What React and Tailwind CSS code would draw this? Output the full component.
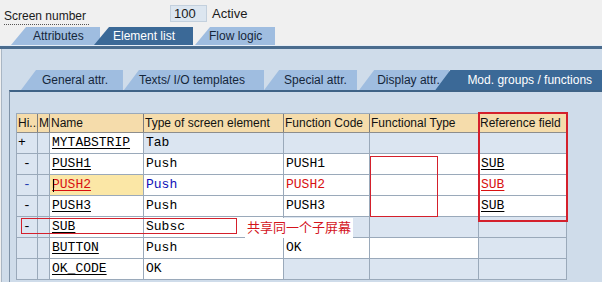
import React from 'react';

const COLS = [21, 12, 94, 140, 86, 109, 88];
const HEAD = ['Hi...', 'M', 'Name', 'Type of screen element', 'Function Code', 'Functional Type', 'Reference field'];

// bg per column: w = white, b = light blue, y = yellow
const ROWS = [
  { hi: '+', name: 'MYTABSTRIP', type: 'Tab', fc: '', rf: '', bg: 'bbwbbbb' },
  { hi: '-', name: 'PUSH1', type: 'Push', fc: 'PUSH1', rf: 'SUB', bg: 'bbwwwww' },
  { hi: '-', name: 'PUSH2', type: 'Push', fc: 'PUSH2', rf: 'SUB', bg: 'bbywwww', sel: true },
  { hi: '-', name: 'PUSH3', type: 'Push', fc: 'PUSH3', rf: 'SUB', bg: 'bbwwwww' },
  { hi: '-', name: 'SUB', type: 'Subsc', fc: '', rf: '', bg: 'bbwwbbb' },
  { hi: '', name: 'BUTTON', type: 'Push', fc: 'OK', rf: '', bg: 'bbwwwwb' },
  { hi: '', name: 'OK_CODE', type: 'OK', fc: '', rf: '', bg: 'bbwwbbb' },
];

const bgClass = { w: 'bg-white', b: 'bg-[#dbe5f1]', y: 'bg-[#fbe7a6]' };

const Tab = ({ label, active, className, textPad }) => (
  <div
    className={
      'h-full flex items-center [clip-path:polygon(15px_0,100%_0,100%_100%,0_100%)] ' +
      (active ? 'bg-[#3b6997] text-white z-10 ' : 'bg-[#9fbde0] text-[#15263a] ') +
      className
    }
  >
    <span className={textPad + ' whitespace-nowrap'}>{label}</span>
  </div>
);

const Cell = ({ w, bg, children, className = '' }) => (
  <div
    style={{ width: w }}
    className={'shrink-0 h-full border-r border-[#9aa9ba] overflow-hidden whitespace-nowrap ' + bgClass[bg] + ' ' + className}
  >
    {children}
  </div>
);

export default function App() {
  return (
    <div className="w-[602px] h-[282px] overflow-hidden bg-[#f0f0f0] flex flex-col font-['Liberation_Sans',sans-serif] text-[12px] text-[#1a1a1a]">
      {/* screen number row */}
      <div className="h-[27px] flex items-start pt-[5px] pl-[4px] shrink-0">
        <div className="w-[166px] pt-[2px]">
          <span className="border-b border-dotted border-[#555] pr-[3px] leading-[15px] inline-block">Screen number</span>
        </div>
        <div className="w-[37px] h-[17px] bg-[#dce6f0] border border-[#c3d0dd] text-[13px] leading-[15px] pl-[3px]">100</div>
        <div className="ml-[5px] text-[13px] leading-[17px]">Active</div>
      </div>

      {/* main tabs */}
      <div className="h-[19px] flex shrink-0 pl-[11px] border-b border-[#e6eef7]">
        <Tab label="Attributes" className="w-[89px]" textPad="pl-[22px]" />
        <Tab label="Element list" active className="w-[99px] -ml-[6px]" textPad="pl-[19px]" />
        <Tab label="Flow logic" className="w-[80px] ml-[2px]" textPad="pl-[14px]" />
      </div>
      <div className="h-[3px] bg-[#4a6c8e] shrink-0" />

      {/* outer panel */}
      <div className="flex-1 bg-[#cfdcea] border-l border-[#a9b6c4] ml-[1px] flex flex-col pt-[21px]">
        <div className="h-[20px] flex pl-[19px] shrink-0">
          <Tab label="General attr." className="w-[104px]" textPad="pl-[21px]" />
          <Tab label="Texts/ I/O templates" className="w-[143px] ml-[1px]" textPad="pl-[15px]" />
          <Tab label="Special attr." className="w-[95px]" textPad="pl-[20px]" />
          <Tab label="Display attr." className="w-[92px] ml-[2px]" textPad="pl-[18px]" />
          <Tab label="Mod. groups / functions" active className="w-[170px] -ml-[14px]" textPad="pl-[32px]" />
        </div>
        <div className="flex-1 ml-[7px] border-l border-[#7f93a8] border-t-2 border-t-[#3f6386] pt-[21px] pl-[6px]">
          <div className="relative w-[551px] border-l border-t border-[#9aa9ba]">
            {/* header */}
            <div className="h-[19px] flex bg-[#f5dcab] border-b border-[#8d8d8d]">
              {HEAD.map((h, i) => (
                <div
                  key={h}
                  style={{ width: COLS[i] }}
                  className="shrink-0 h-full border-r border-[#7d7d7d] pl-[1px] leading-[18px] overflow-hidden whitespace-nowrap text-[#111]"
                >
                  {h}
                </div>
              ))}
            </div>
            {ROWS.map((r) => (
              <div key={r.name} className="h-[21px] flex border-b border-[#9aa9ba] font-['Liberation_Mono',monospace] text-[13px] leading-[20px] text-black">
                <Cell w={COLS[0]} bg={r.bg[0]} className={r.hi === '+' ? 'pl-[1px]' : 'text-center ' + (r.sel ? 'text-[#1f3fb0]' : '')}>
                  {r.hi}
                </Cell>
                <Cell w={COLS[1]} bg={r.bg[1]} />
                <Cell w={COLS[2]} bg={r.bg[2]} className={'pl-[2px] underline underline-offset-[2px] relative ' + (r.sel ? 'text-[#d81010]' : '')}>
                  {r.sel && <span className="absolute left-[3px] top-[4px] w-[1px] h-[13px] bg-black" />}
                  {r.name}
                </Cell>
                <Cell w={COLS[3]} bg={r.bg[3]} className={'pl-[2px] ' + (r.sel ? 'text-[#1010b8]' : '')}>
                  {r.type}
                </Cell>
                <Cell w={COLS[4]} bg={r.bg[4]} className={'pl-[2px] ' + (r.sel ? 'text-[#d81010]' : '')}>
                  {r.fc}
                </Cell>
                <Cell w={COLS[5]} bg={r.bg[5]} />
                <Cell w={COLS[6]} bg={r.bg[6]} className={'pl-[2px] underline underline-offset-[2px] ' + (r.sel ? 'text-[#d81010]' : '')}>
                  {r.rf}
                </Cell>
              </div>
            ))}

            {/* annotations */}
            <div className="absolute left-[353px] top-[42px] w-[68px] h-[61px] border border-[#d4202c]" />
            <div className="absolute left-[461px] top-[-2px] w-[90px] h-[110px] border-2 border-[#d4202c]" />
            <div className="absolute left-[4px] top-[104px] w-[216px] h-[16px] border border-[#d4202c]" />
            <div className="absolute left-[228px] top-[104px] w-[108px] h-[20px] bg-white pl-[2px] text-[#d4141c] text-[13px] leading-[18px] font-['Noto_Sans_CJK_SC',sans-serif]">
              共享同一个子屏幕
            </div>
          </div>
        </div>
      </div>
    </div>
  );
}
